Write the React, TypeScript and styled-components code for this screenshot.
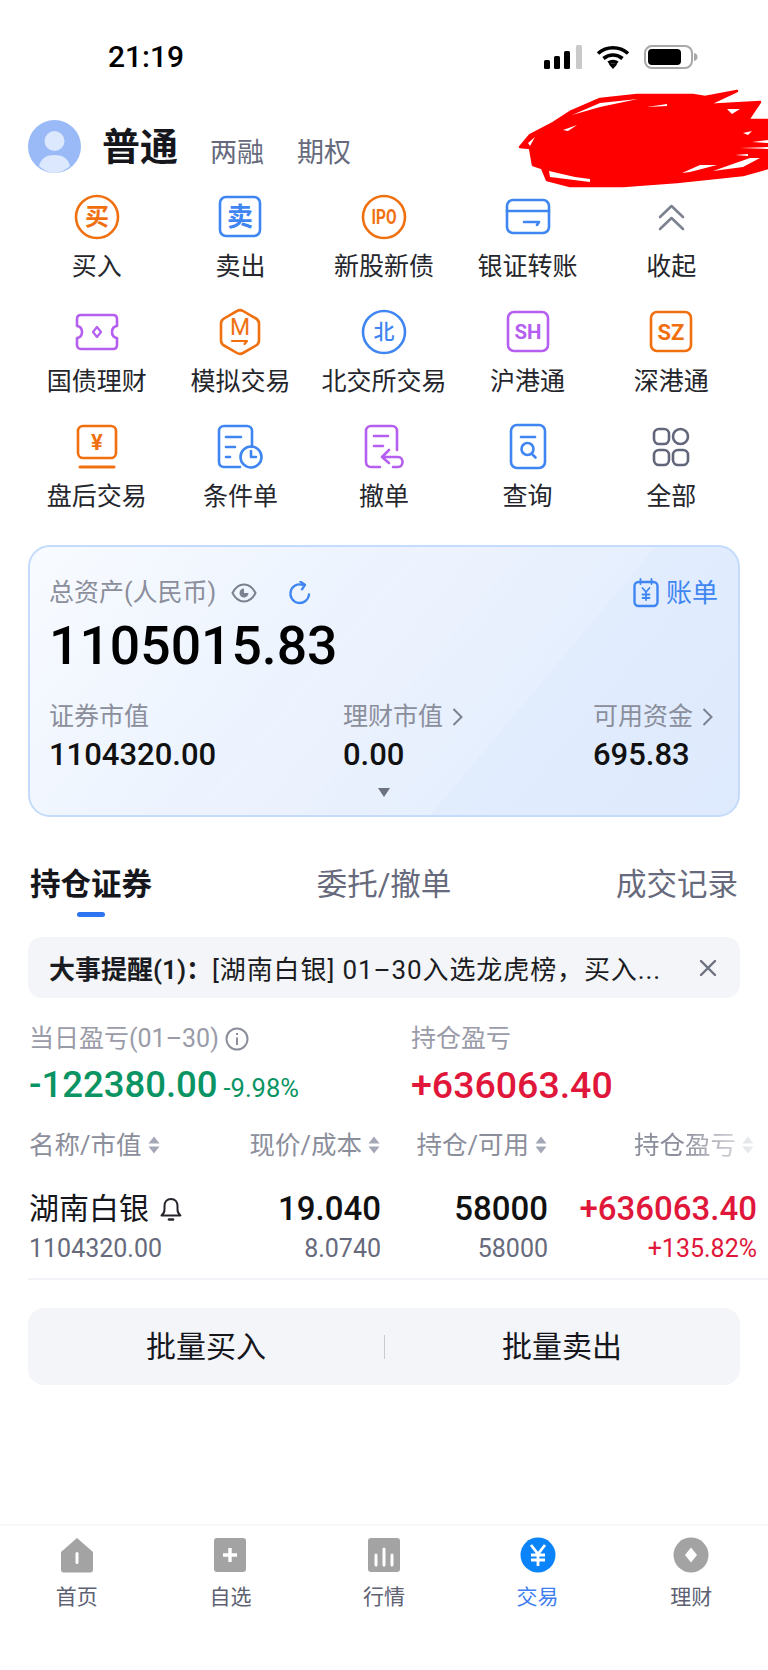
import { ReactNode } from "react";
import styled, { createGlobalStyle } from "styled-components";

const ORANGE = "#f0700f";
const BLUE = "#3f86f2";
const PURPLE = "#b45ff0";
const SLATE = "#62667a";
const FONT = `Roboto, "Noto Sans CJK SC", sans-serif`;

const GlobalStyle = createGlobalStyle`
  html, body {
    margin: 0;
    padding: 0;
    background: #fff;
    font-family: ${FONT};
    color: #16171c;
  }
  * { box-sizing: border-box; }
`;

const Page = styled.div`
  width: 768px;
  height: 1670px;
  display: flex;
  flex-direction: column;
  overflow: hidden;
  background: #fff;
`;

const Main = styled.main`
  flex: 1;
`;

const StatusBar = styled.div`
  height: 120px;
  padding: 40px 70px 0 108px;
  display: flex;
  justify-content: space-between;
  align-items: flex-start;
`;

const Time = styled.span`
  font-size: 30px;
  line-height: 34px;
  font-weight: 500;
  color: #000;
`;

const StatusIcons = styled.div`
  display: flex;
  align-items: center;
  gap: 14px;
  height: 34px;
`;

const Header = styled.header`
  position: relative;
  height: 72px;
  padding-left: 28px;
  display: flex;
  align-items: flex-start;
`;

const Avatar = styled.svg`
  width: 53px;
  height: 53px;
  flex: none;
`;

const AccountName = styled.span`
  margin-left: 21px;
  font-size: 38px;
  line-height: 54px;
  font-weight: 700;
  color: #16171c;
`;

const AccountLink = styled.span<{ $gap: number }>`
  margin-left: ${(p) => p.$gap}px;
  margin-top: 13px;
  font-size: 27px;
  line-height: 40px;
  color: #666a7c;
`;

const Scribble = styled.svg`
  position: absolute;
  right: 0;
  top: -32px;
  width: 250px;
  height: 102px;
`;

const QuickGrid = styled.nav`
  padding: 0 25px;
  display: grid;
  grid-template-columns: repeat(5, 1fr);
  row-gap: 23px;
`;

const QuickItem = styled.div`
  display: flex;
  flex-direction: column;
  align-items: center;
  gap: 8px;
`;

const QuickIcon = styled.svg`
  width: 50px;
  height: 50px;
  fill: none;
  stroke-width: 2.6;
  stroke-linecap: round;
  stroke-linejoin: round;
`;

const QuickLabel = styled.span`
  font-size: 25px;
  line-height: 34px;
  color: #25262c;
  white-space: nowrap;
`;

const AssetCard = styled.section`
  margin: 31px 28px 0;
  height: 272px;
  padding: 29px 20px 0 19px;
  border: 2px solid #c4dbfb;
  border-radius: 22px;
  background:
    linear-gradient(
      130deg,
      transparent 41.4%,
      rgba(255, 255, 255, 0.1) 41.4% 53.3%,
      transparent 53.3% 67%,
      rgba(205, 225, 255, 0.2) 67%
    ),
    linear-gradient(130deg, #f8fbff 0%, #e9f1fe 50%, #e2ecfd 100%);
  position: relative;
`;

const AssetTop = styled.div`
  display: flex;
  align-items: center;
  height: 34px;
`;

const MutedLabel = styled.span`
  font-size: 25px;
  line-height: 34px;
  color: #8b8e9b;
  white-space: nowrap;
`;

const IconButton = styled.svg<{ $ml: number }>`
  margin-left: ${(p) => p.$ml}px;
  flex: none;
`;

const BillLink = styled.span`
  margin-left: auto;
  display: flex;
  align-items: center;
  gap: 7px;
  font-size: 26px;
  line-height: 34px;
  color: #3f86f2;
`;

const TotalValue = styled.div`
  margin-top: 5px;
  font-size: 53.5px;
  line-height: 62px;
  font-weight: 500;
  color: #000;
`;

const AssetGrid = styled.div`
  margin-top: 23px;
  display: grid;
  grid-template-columns: 294px 250px 1fr;
`;

const AssetCell = styled.div`
  display: flex;
  flex-direction: column;
  gap: 3px;
`;

const AssetLabel = styled(MutedLabel)`
  display: flex;
  align-items: center;
  gap: 9px;
`;

const AssetValue = styled.span`
  font-size: 31px;
  line-height: 36px;
  font-weight: 500;
  color: #111;
`;

const ExpandMark = styled.span`
  position: absolute;
  left: 50%;
  bottom: 18px;
  margin-left: -6px;
  width: 0;
  height: 0;
  border-left: 6px solid transparent;
  border-right: 6px solid transparent;
  border-top: 9px solid #6d7180;
`;

const Tabs = styled.div`
  margin-top: 46px;
  padding: 0 30px;
  display: flex;
  justify-content: space-between;
`;

const Tab = styled.span<{ $active?: boolean }>`
  position: relative;
  font-size: 30.5px;
  line-height: 44px;
  font-weight: ${(p) => (p.$active ? 600 : 400)};
  color: ${(p) => (p.$active ? "#16171c" : "#666a7c")};

  ${(p) =>
    p.$active &&
    `&::after {
      content: "";
      position: absolute;
      left: 47px;
      bottom: -10px;
      width: 28px;
      height: 5px;
      border-radius: 3px;
      background: #2d74f0;
    }`}
`;

const Notice = styled.div`
  margin: 30px 28px 0;
  height: 61px;
  padding: 0 23px 0 21px;
  display: flex;
  align-items: center;
  border-radius: 14px;
  background: #f4f5f9;
  font-size: 26px;
  color: #1b1c22;
  white-space: nowrap;
`;

const NoticeLead = styled.b`
  font-weight: 600;
`;

const NoticeText = styled.span`
  letter-spacing: 0.9px;
`;

const NoticeClose = styled.svg`
  margin-left: auto;
  flex: none;
`;

const Stats = styled.div`
  margin-top: 24px;
  padding-left: 29px;
  display: grid;
  grid-template-columns: 382px 1fr;
`;

const StatBlock = styled.div`
  display: flex;
  flex-direction: column;
  gap: 7px;
`;

const StatLabel = styled.span`
  display: flex;
  align-items: center;
  gap: 6px;
  font-size: 25px;
  line-height: 34px;
  color: #9a9ba8;
`;

const StatValue = styled.span<{ $tone: string; $size: number }>`
  font-size: ${(p) => p.$size}px;
  line-height: 44px;
  font-weight: 500;
  color: ${(p) => p.$tone};
`;

const StatPercent = styled.span`
  margin-left: 6px;
  font-size: 25.5px;
  font-weight: 400;
`;

const TableHead = styled.div`
  margin-top: 18px;
  padding: 0 14px 0 29px;
  display: grid;
  grid-template-columns: 191px 160px 167px 1fr;
`;

const HeadCell = styled.span<{ $left?: boolean; $fade?: boolean }>`
  display: flex;
  align-items: center;
  gap: 6px;
  justify-content: ${(p) => (p.$left ? "flex-start" : "flex-end")};
  font-size: 25.5px;
  line-height: 34px;
  color: #8b8e9b;
  white-space: nowrap;
  ${(p) => p.$fade && "-webkit-mask-image: linear-gradient(to right, #000 65%, rgba(0,0,0,0.2) 100%);"}
`;

const SortMark = styled.svg`
  width: 12px;
  height: 20px;
  flex: none;
`;

const HoldingRow = styled.div`
  margin-top: 25px;
  padding: 0 11px 0 29px;
  display: grid;
  grid-template-columns: 191px 161px 167px 1fr;
  row-gap: 1px;
`;

const HoldingName = styled.span`
  display: flex;
  align-items: center;
  gap: 11px;
  font-size: 30px;
  line-height: 44px;
  color: #16171c;
`;

const PrimaryCell = styled.span<{ $tone?: string }>`
  text-align: right;
  font-size: 33px;
  line-height: 44px;
  font-weight: 500;
  color: ${(p) => p.$tone || "#111"};
`;

const SecondaryCell = styled.span<{ $left?: boolean; $tone?: string }>`
  text-align: ${(p) => (p.$left ? "left" : "right")};
  font-size: 25px;
  line-height: 34px;
  color: ${(p) => p.$tone || "#666a7c"};
`;

const Divider = styled.div`
  margin: 12px 0 0 28px;
  height: 2px;
  background: #f2f3f6;
`;

const BatchBar = styled.div`
  margin: 28px 28px 0;
  height: 77px;
  display: grid;
  grid-template-columns: 1fr 1fr;
  align-items: center;
  border-radius: 16px;
  background: #f4f5f9;
  position: relative;

  &::before {
    content: "";
    position: absolute;
    left: 50%;
    top: 27px;
    width: 1px;
    height: 24px;
    background: #c9cbd4;
  }
`;

const BatchButton = styled.span`
  text-align: center;
  font-size: 30px;
  line-height: 36px;
  color: #16171c;
`;

const TabBar = styled.footer`
  height: 146px;
  padding-top: 11px;
  border-top: 2px solid #f7f7f9;
  display: grid;
  grid-template-columns: repeat(5, 1fr);
  align-content: start;
`;

const TabItem = styled.div<{ $active?: boolean }>`
  display: flex;
  flex-direction: column;
  align-items: center;
  gap: 8px;
  font-size: 21px;
  line-height: 32px;
  color: ${(p) => (p.$active ? "#3d7ef0" : "#5d6172")};
`;

const TabIcon = styled.svg`
  width: 36px;
  height: 36px;
`;

const glyph = (tone: string, size: number, weight = 600, y = 25) => ({
  x: 25,
  y,
  fill: tone,
  stroke: "none",
  fontSize: size,
  fontWeight: weight,
  textAnchor: "middle" as const,
  dominantBaseline: "central" as const,
  fontFamily: FONT,
});

const Quick = ({ label, children }: { label: string; children: ReactNode }) => (
  <QuickItem>
    <QuickIcon viewBox="0 0 50 50">{children}</QuickIcon>
    <QuickLabel>{label}</QuickLabel>
  </QuickItem>
);

const Sort = () => (
  <SortMark viewBox="0 0 12 20">
    <path d="M6 1.500 11.500 8.500H.5zM6 18.500.5 11.500h11z" fill="#a4a7b5" />
  </SortMark>
);

export default function App() {
  return (
    <Page>
      <GlobalStyle />
      <StatusBar>
        <Time>21:19</Time>
        <StatusIcons>
          <svg width="38" height="24" viewBox="0 0 38 24">
            <rect x="0" y="15" width="6" height="9" rx="1.5" fill="#000" />
            <rect x="10" y="11" width="6" height="13" rx="1.5" fill="#000" />
            <rect x="20" y="6" width="6" height="18" rx="1.5" fill="#000" />
            <rect x="32" y="0" width="6" height="24" rx="1.5" fill="#c9c9c9" />
          </svg>
          <svg width="34" height="24" viewBox="0 0 34 24" fill="none" stroke="#000" strokeWidth="3.6">
            <path d="M2 8.500C10.500 .8 23.500 .8 32 8.500" />
            <path d="M7.500 13.500c5.500-4.600 13.500-4.600 19 0" />
            <path d="M12.500 18c2.500-1.900 6.500-1.900 9 0" />
            <path d="M17 24l-4-4.500c2.500-1.600 5.500-1.600 8 0z" fill="#000" stroke="none" />
          </svg>
          <svg width="54" height="24" viewBox="0 0 54 24">
            <rect x="1" y="1" width="47" height="22" rx="7" fill="none" stroke="#a8a8a8" strokeWidth="2" />
            <rect x="4" y="4" width="33" height="16" rx="4" fill="#000" />
            <path d="M50 8c2.500.5 3.500 2 3.500 4s-1 3.500-3.500 4z" fill="#a8a8a8" />
          </svg>
        </StatusIcons>
      </StatusBar>

      <Main>
        <Header>
          <Avatar viewBox="0 0 53 53">
            <circle cx="26.500" cy="26.500" r="26.500" fill="#99baf7" />
            <circle cx="26.500" cy="21" r="10" fill="#dce8fd" />
            <path d="M11 46c2-8 8-11 15.500-11S40 38 42 46c-4.500 4-10 7-15.500 7S15.500 50 11 46z" fill="#dce8fd" />
          </Avatar>
          <AccountName>普通</AccountName>
          <AccountLink $gap={32}>两融</AccountLink>
          <AccountLink $gap={33}>期权</AccountLink>
          <Scribble viewBox="518 88 250 102">
            <path
              d="M520 147L530 135L553 123L570 112L600 99L637 95L693 95L705 97L737 91L707 105L760 102L748 120L768 120V168L743 175L677 182L623 186L570 186L547 180L542 168L533 165L530 148Z"
              fill="#fe0000"
              stroke="#fe0000"
              strokeWidth="2.500"
              strokeLinejoin="round"
            />
            <path
              d="M572 115L600 103L638 99L600 107ZM549 171L550 177L590 182L590 179L575 177ZM682 173L700 165L717 165L690 172ZM713 171L743 167L760 158L750 158L730 165ZM727 109L740 109L732 114ZM647 107L667 104L667 106ZM528 143L535 137L530 146ZM563 130L577 125L568 131ZM743 133L752 131L748 135ZM752 142L768 140V143ZM740 148L768 147V149ZM735 155L748 154V156Z"
              fill="#fff"
            />
          </Scribble>
        </Header>

        <QuickGrid>
          <Quick label="买入">
            <circle cx="25" cy="25" r="21" stroke={ORANGE} />
            <text {...glyph(ORANGE, 24)}>买</text>
          </Quick>
          <Quick label="卖出">
            <rect x="5" y="5" width="40" height="39" rx="6" stroke={BLUE} />
            <text {...glyph(BLUE, 26)}>卖</text>
          </Quick>
          <Quick label="新股新债">
            <circle cx="25" cy="25" r="21" stroke={ORANGE} />
            <text {...glyph(ORANGE, 20, 700)} textLength="25" lengthAdjust="spacingAndGlyphs">IPO</text>
          </Quick>
          <Quick label="银证转账">
            <rect x="4" y="8" width="42" height="33" rx="6" stroke={BLUE} />
            <path d="M4 19h42M21 30h15l-2 3" stroke={BLUE} />
          </Quick>
          <Quick label="收起">
            <path d="M14 25 25.500 14 37 25M14 37 25.500 26 37 37" stroke="#7d8290" />
          </Quick>

          <Quick label="国债理财">
            <path
              d="M9 8h32c2.500 0 4 1.500 4 4v7c-3 .5-5 3-5 6s2 5.500 5 6v7c0 2.500-1.500 4-4 4H9c-2.500 0-4-1.500-4-4v-7c3-.5 5-3 5-6s-2-5.500-5-6v-7c0-2.500 1.500-4 4-4z"
              stroke={PURPLE}
            />
            <path d="M25 20l4 5-4 5-4-5z" stroke={PURPLE} strokeWidth="2.200" />
          </Quick>
          <Quick label="模拟交易">
            <path
              d="M22 4q3-1.800 6 0L41 11.500q3 1.800 3 5V33.500q0 3.200-3 5L28 46q-3 1.800-6 0L9 38.500q-3-1.800-3-5V16.500q0-3.200 3-5z"
              stroke={ORANGE}
            />
            <text {...glyph(ORANGE, 23, 400, 20)}>M</text>
            <path d="M17 34h15l-2.500 3" stroke={ORANGE} strokeWidth="2.200" />
          </Quick>
          <Quick label="北交所交易">
            <circle cx="25" cy="25" r="21" stroke={BLUE} />
            <text {...glyph(BLUE, 21, 500)}>北</text>
          </Quick>
          <Quick label="沪港通">
            <rect x="5" y="5" width="40" height="39" rx="6" stroke={PURPLE} />
            <text {...glyph(PURPLE, 21, 700)} textLength="27" lengthAdjust="spacingAndGlyphs">SH</text>
          </Quick>
          <Quick label="深港通">
            <rect x="5" y="5" width="40" height="39" rx="6" stroke={ORANGE} />
            <text {...glyph(ORANGE, 22, 700)}>SZ</text>
          </Quick>

          <Quick label="盘后交易">
            <rect x="6" y="4" width="38" height="32" rx="5" stroke={ORANGE} />
            <path d="M8 45h34" stroke={ORANGE} strokeWidth="3" />
            <text {...glyph(ORANGE, 22, 700, 20)}>¥</text>
          </Quick>
          <Quick label="条件单">
            <path d="M25 45H9c-3 0-5-2-5-5V9c0-3 2-5 5-5h23c3 0 5 2 5 5v16" stroke={BLUE} />
            <path d="M11 15h15M11 25h9M11 35h4" stroke={BLUE} />
            <circle cx="36" cy="35" r="10.500" stroke={BLUE} />
            <path d="M36 29v6h5" stroke={BLUE} />
          </Quick>
          <Quick label="撤单">
            <path d="M21 45h-9c-3 0-5-2-5-5V9c0-3 2-5 5-5h21c3 0 5 2 5 5v19" stroke={PURPLE} />
            <path d="M15 14h14M15 24h9" stroke={PURPLE} />
            <path d="M30 28l-7 7 7 6M23 35h16c6 0 6 10 0 10h-5" stroke={PURPLE} />
          </Quick>
          <Quick label="查询">
            <rect x="8" y="3" width="34" height="43" rx="6" stroke={BLUE} />
            <path d="M18 15h14" stroke={BLUE} />
            <circle cx="24.500" cy="27" r="6" stroke={BLUE} />
            <path d="M29 32l3.500 3.500" stroke={BLUE} />
          </Quick>
          <Quick label="全部">
            <rect x="8" y="7" width="15" height="15" rx="5" stroke={SLATE} />
            <circle cx="34.500" cy="14.500" r="7.500" stroke={SLATE} />
            <rect x="8" y="28" width="15" height="15" rx="5" stroke={SLATE} />
            <rect x="27" y="28" width="15" height="15" rx="5" stroke={SLATE} />
          </Quick>
        </QuickGrid>

        <AssetCard>
          <AssetTop>
            <MutedLabel>总资产(人民币)</MutedLabel>
            <IconButton $ml={15} width="26" height="22" viewBox="0 0 26 22" fill="none" stroke="#7d8290" strokeWidth="2">
              <path d="M1.500 11C4.500 5 8.500 2.500 13 2.500S21.500 5 24.500 11c-3 6-7 8.500-11.500 8.500S4.500 17 1.500 11z" />
              <path d="M13 6.500a4.500 4.500 0 1 0 4.500 4.500H13z" fill="#7d8290" stroke="none" />
            </IconButton>
            <IconButton $ml={31} width="24" height="24" viewBox="0 0 24 24" fill="none" stroke="#3f86f2" strokeWidth="2.300" strokeLinecap="round" strokeLinejoin="round">
              <path d="M21 13.500A9.300 9.300 0 1 1 14.500 3.800" />
              <path d="M12.500 .8l4.500 3-3 4.500" />
            </IconButton>
            <BillLink>
              <svg width="26" height="30" viewBox="0 0 26 30" fill="none" stroke="#3f86f2" strokeWidth="2.400" strokeLinecap="round">
                <rect x="1.500" y="4" width="23" height="24" rx="4" />
                <path d="M7.500 1v5M18.500 1v5M9.500 10l3.500 4 3.500-4M13 14v8M9.500 16.500h7M9.500 20h7" strokeWidth="1.800" />
              </svg>
              账单
            </BillLink>
          </AssetTop>
          <TotalValue>1105015.83</TotalValue>
          <AssetGrid>
            <AssetCell>
              <AssetLabel>证券市值</AssetLabel>
              <AssetValue>1104320.00</AssetValue>
            </AssetCell>
            <AssetCell>
              <AssetLabel>
                理财市值
                <svg width="11" height="20" viewBox="0 0 11 20" fill="none" stroke="#7d8290" strokeWidth="2">
                  <path d="M1.500 2 9.500 10 1.500 18" />
                </svg>
              </AssetLabel>
              <AssetValue>0.00</AssetValue>
            </AssetCell>
            <AssetCell>
              <AssetLabel>
                可用资金
                <svg width="11" height="20" viewBox="0 0 11 20" fill="none" stroke="#7d8290" strokeWidth="2">
                  <path d="M1.500 2 9.500 10 1.500 18" />
                </svg>
              </AssetLabel>
              <AssetValue>695.83</AssetValue>
            </AssetCell>
          </AssetGrid>
          <ExpandMark />
        </AssetCard>

        <Tabs>
          <Tab $active>持仓证券</Tab>
          <Tab>委托/撤单</Tab>
          <Tab>成交记录</Tab>
        </Tabs>

        <Notice>
          <NoticeLead>大事提醒(1)：</NoticeLead>
          <NoticeText>[湖南白银] 01–30入选龙虎榜，买入...</NoticeText>
          <NoticeClose width="18" height="18" viewBox="0 0 18 18" stroke="#6d7180" strokeWidth="2.400" strokeLinecap="round">
            <path d="M2 2l14 14M16 2 2 16" />
          </NoticeClose>
        </Notice>

        <Stats>
          <StatBlock>
            <StatLabel>
              当日盈亏(01–30)
              <svg width="24" height="24" viewBox="0 0 24 24" fill="none" stroke="#8b8e9b" strokeWidth="2">
                <circle cx="12" cy="12" r="10.500" />
                <path d="M12 10.500v7.500M12 6v2" />
              </svg>
            </StatLabel>
            <StatValue $tone="#0a9463" $size={36.5}>
              -122380.00<StatPercent>-9.98%</StatPercent>
            </StatValue>
          </StatBlock>
          <StatBlock>
            <StatLabel>持仓盈亏</StatLabel>
            <StatValue $tone="#e0173a" $size={37.5}>+636063.40</StatValue>
          </StatBlock>
        </Stats>

        <TableHead>
          <HeadCell $left>名称/市值<Sort /></HeadCell>
          <HeadCell>现价/成本<Sort /></HeadCell>
          <HeadCell>持仓/可用<Sort /></HeadCell>
          <HeadCell $fade>持仓盈亏<Sort /></HeadCell>
        </TableHead>

        <HoldingRow>
          <HoldingName>
            湖南白银
            <svg width="22" height="26" viewBox="0 0 22 26" fill="none" stroke="#25262c" strokeWidth="2" strokeLinejoin="round">
              <path d="M1.500 19.500c2-1.500 3-3 3-6V10c0-4 2.500-7 6.500-7s6.500 3 6.500 7v3.500c0 3 1 4.500 3 6z" />
              <path d="M9 23.500h4" strokeWidth="2.600" strokeLinecap="round" />
            </svg>
          </HoldingName>
          <PrimaryCell>19.040</PrimaryCell>
          <PrimaryCell>58000</PrimaryCell>
          <PrimaryCell $tone="#e0173a">+636063.40</PrimaryCell>
          <SecondaryCell $left>1104320.00</SecondaryCell>
          <SecondaryCell>8.0740</SecondaryCell>
          <SecondaryCell>58000</SecondaryCell>
          <SecondaryCell $tone="#e0173a">+135.82%</SecondaryCell>
        </HoldingRow>
        <Divider />

        <BatchBar>
          <BatchButton>批量买入</BatchButton>
          <BatchButton>批量卖出</BatchButton>
        </BatchBar>
      </Main>

      <TabBar>
        <TabItem>
          <TabIcon viewBox="0 0 36 36">
            <path d="M18 1 34 15v18c0 1.500-1 2.500-2.500 2.500h-27C3 35.500 2 34.500 2 33V15z" fill="#a3a3a3" />
            <rect x="16.500" y="15" width="3" height="12" rx="1.500" fill="#fff" />
          </TabIcon>
          首页
        </TabItem>
        <TabItem>
          <TabIcon viewBox="0 0 36 36">
            <rect x="2" y="1" width="32" height="34" rx="3" fill="#a3a3a3" />
            <path d="M11 18h14M18 11v14" stroke="#fff" strokeWidth="3.400" />
          </TabIcon>
          自选
        </TabItem>
        <TabItem>
          <TabIcon viewBox="0 0 36 36">
            <rect x="2" y="1" width="32" height="34" rx="3" fill="#a3a3a3" />
            <path d="M10 18v10M18 12v16M26 18v10" stroke="#fff" strokeWidth="3" strokeLinecap="round" />
          </TabIcon>
          行情
        </TabItem>
        <TabItem $active>
          <TabIcon viewBox="0 0 36 36">
            <circle cx="18" cy="18" r="17.500" fill="#0a84f8" />
            <path d="M11 8l7 9 7-9M18 17v12M11 18h14M11 23h14" fill="none" stroke="#fff" strokeWidth="2.800" />
          </TabIcon>
          交易
        </TabItem>
        <TabItem>
          <TabIcon viewBox="0 0 36 36">
            <circle cx="18" cy="18" r="17.500" fill="#a3a3a3" />
            <path d="M18 10.500 24 18l-6 7.500L12 18z" fill="#fff" />
          </TabIcon>
          理财
        </TabItem>
      </TabBar>
    </Page>
  );
}
